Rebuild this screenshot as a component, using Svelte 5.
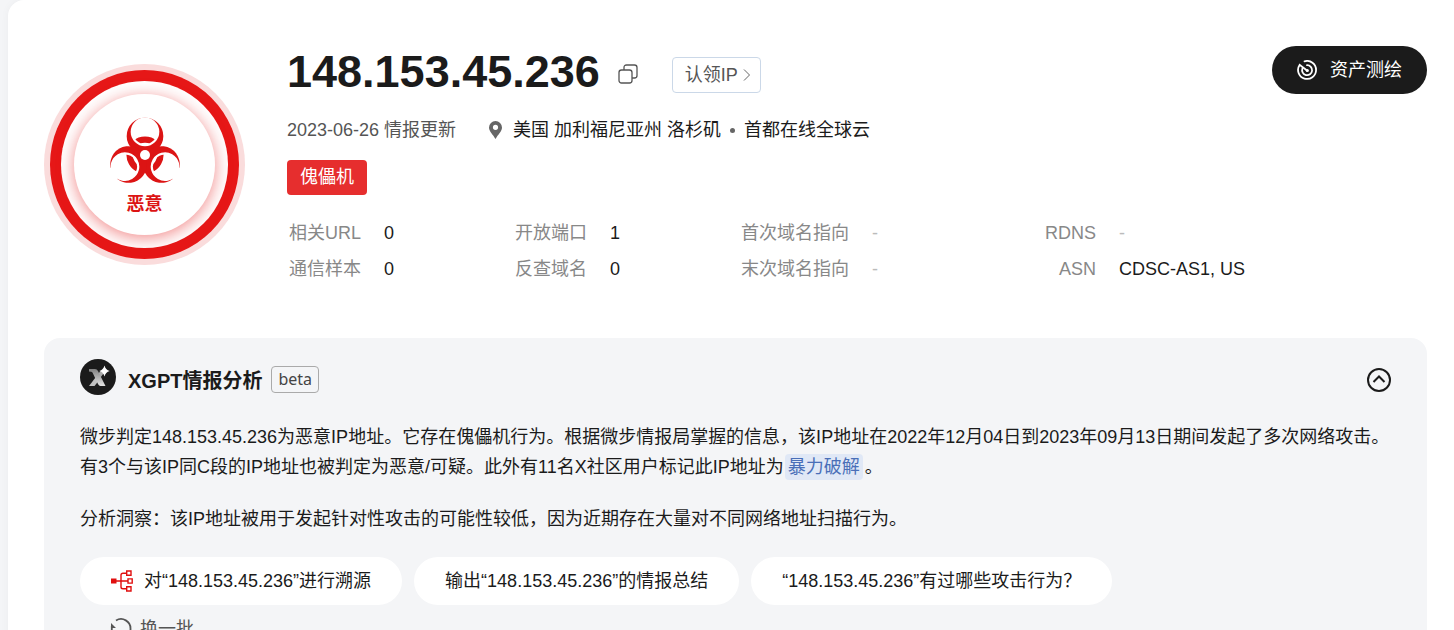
<script>
  const ip = '148.153.45.236';
  const stats = [
    [['相关URL', '0'], ['通信样本', '0']],
    [['开放端口', '1'], ['反查域名', '0']],
    [['首次域名指向', '-'], ['末次域名指向', '-']],
    [['RDNS', '-'], ['ASN', 'CDSC-AS1, US']],
  ];
  let open = $state(true);
</script>

<main class="page">
  <div class="sheet">
    <header class="summary">
      <div class="verdict">
        <div class="ring">
          <div class="halo">
            <div class="core">
              <svg class="hazard" viewBox="-108 -117 216 210" aria-hidden="true">
                <defs>
                  <clipPath id="petal"><circle cx="0" cy="-69" r="36" /></clipPath>
                </defs>
                {#each [0, 120, 240] as a}
                  <circle cx="0" cy="-57" r="55" fill="#dc1414" transform="rotate({a})" />
                {/each}
                {#each [0, 120, 240] as a}
                  <g transform="rotate({a})">
                    <circle cx="0" cy="-69.500" r="43" fill="#fff" />
                    <circle r="46" fill="none" stroke="#dc1414" stroke-width="19" clip-path="url(#petal)" />
                  </g>
                {/each}
                <circle r="15" fill="#fff" />
                <path d="M-108 42 -84 72M108 42 84 72" stroke="#fff" stroke-width="14" />
              </svg>
              <strong>恶意</strong>
            </div>
          </div>
        </div>
      </div>

      <div class="info">
        <div class="title-row">
          <h1>{ip}</h1>
          <button class="copy" aria-label="复制">
            <svg width="20" height="20" viewBox="0 0 20 20" fill="none" stroke="#555" stroke-width="1.3">
              <rect x="1" y="6" width="13" height="13" rx="2.5" />
              <path d="M6 6V3.500Q6 1 8.500 1H16.500Q19 1 19 3.500V11.500Q19 14 16.500 14H14" />
            </svg>
          </button>
          <button class="claim">认领IP
            <svg width="8" height="12" viewBox="0 0 8 12" fill="none" stroke="#666"><path d="M1 .5 6.500 6 1 11.500" /></svg>
          </button>
          <button class="asset">
            <svg width="20" height="20" viewBox="0 0 20 20" fill="none" stroke="#fff" stroke-width="1.800" stroke-linecap="round">
              <path d="M7.500 1.300A9 9 0 1 1 2.600 4.900L10 10.500" />
              <path d="M10 5.200A5 5 0 1 1 5.400 8.500" />
              <circle cx="10.300" cy="10.500" r="1.600" fill="#fff" stroke="none" />
            </svg>
            资产测绘
          </button>
        </div>

        <div class="meta">
          <span class="date">2023-06-26 情报更新</span>
          <svg width="13" height="18" viewBox="0 0 13 18"><path fill="#666" fill-rule="evenodd" d="M6.500 0A6.500 6.500 0 0 0 0 6.500C0 10.500 4 13.500 6.500 18 9 13.500 13 10.500 13 6.500A6.500 6.500 0 0 0 6.500 0ZM6.500 3.700A2.600 2.600 0 1 1 6.500 8.900 2.600 2.600 0 1 1 6.500 3.700Z" /></svg>
          <span>美国 加利福尼亚州 洛杉矶</span>
          <i class="dot"></i>
          <span>首都在线全球云</span>
        </div>

        <span class="tag">傀儡机</span>

        <div class="stats">
          {#each stats as group}
            <dl>
              {#each group as [label, value]}
                <dt>{label}</dt>
                <dd class:empty={value === '-'}>{value}</dd>
              {/each}
            </dl>
          {/each}
        </div>
      </div>
    </header>

    <section class="panel">
      <div class="panel-head">
        <svg width="36" height="36" viewBox="0 0 36 36" aria-hidden="true">
          <defs>
            <linearGradient id="metal" x1="0" y1="0" x2="0" y2="1">
              <stop offset="0" stop-color="#808080" /><stop offset="1" stop-color="#e4e4e4" />
            </linearGradient>
          </defs>
          <circle cx="18" cy="18" r="18" fill="#1b1b1b" />
          <path fill="#c0c0c0" d="M9 27 15.500 18.500 18.500 22 14.500 27Z" />
          <path fill="#aaa" d="M18.500 14.500 20.500 12 23.500 14.500 20.500 18.500Z" />
          <path fill="url(#metal)" d="M9 10H15Q17 10 18 12L25.500 27H20.500Q19 27 18 25L12.500 13.500Q12 12.700 9 12.500Z" />
          <path fill="#fff" d="M24.500 6.500Q25.500 10.700 29.700 12 25.500 13.300 24.500 17.500 23.300 13.300 19.300 12 23.300 10.700 24.500 6.500Z" />
        </svg>
        <h2>XGPT情报分析</h2>
        <span class="beta">beta</span>
        <button class="toggle" aria-label="收起" aria-expanded={open} onclick={() => (open = !open)}>
          <svg width="24" height="24" viewBox="0 0 24 24" fill="none" stroke="#1b1b1b" stroke-width="2">
            <circle cx="12" cy="12" r="11" /><path d="M6.500 14 12 8.500 17.500 14" />
          </svg>
        </button>
      </div>

      {#if open}
        <p>微步判定148.153.45.236为恶意IP地址。它存在傀儡机行为。根据微步情报局掌握的信息，该IP地址在2022年12月04日到2023年09月13日期间发起了多次网络攻击。有3个与该IP同C段的IP地址也被判定为恶意/可疑。此外有11名X社区用户标记此IP地址为<a href="#tag">暴力破解</a>。</p>
        <p>分析洞察：该IP地址被用于发起针对性攻击的可能性较低，因为近期存在大量对不同网络地址扫描行为。</p>

        <div class="prompts">
          <button>
            <svg width="22" height="22" viewBox="0 0 22 22" fill="none" stroke="#e00f0f" stroke-width="1.400">
              <path fill="#e00f0f" stroke="none" d="M0 8.500H5.500V13.500H0Z" />
              <path d="M5 11H17M15 3.200H12Q10 3.200 10 5V17Q10 18.800 12 18.800H15" />
              <path d="M15.700 1H20V5.300H15.700ZM17 8.900H21.200V13.100H17ZM15.700 16.700H20V21H15.700Z" />
            </svg>
            对“{ip}”进行溯源
          </button>
          <button>输出“{ip}”的情报总结</button>
          <button>“{ip}”有过哪些攻击行为？</button>
        </div>

        <button class="refresh">
          <svg width="22" height="22" viewBox="0 0 22 22" fill="none" stroke="#555" stroke-width="1.800">
            <path d="M6 2.500A9.500 9.500 0 0 1 20.500 11V14M16 19.500A9.500 9.500 0 0 1 1.800 13V8" />
            <path fill="#555" stroke="none" d="M1 5 6 10H1ZM21.500 17 16.500 12H21.500Z" />
          </svg>
          换一批
        </button>
      {/if}
    </section>
  </div>
</main>

<style>
  :global(body) { margin: 0; background: #f4f5f7; }
  * { box-sizing: border-box; }
  .page {
    height: 100vh;
    overflow: hidden;
    padding-left: 8px;
    font: 18px/30px "Liberation Sans", "Noto Sans CJK SC", sans-serif;
    color: #1b1b1b;
  }
  button { font: inherit; color: inherit; background: none; border: 0; padding: 0; cursor: pointer; }
  h1, h2, p, dl, dd { margin: 0; }
  svg { display: block; flex: none; }
  .sheet {
    min-height: 100%;
    padding: 0 27px 0 36px;
    background: #fff;
    border-radius: 16px 0 0 0;
    box-shadow: 0 0 8px rgba(0, 0, 0, 0.04);
  }
  .summary { display: flex; gap: 42px; padding-top: 46px; }
  .verdict, .ring, .halo, .core { border-radius: 50%; flex: none; }
  .verdict { align-self: flex-start; margin-top: 18px; padding: 6px; background: #fadcdc; }
  .ring { padding: 11px; background: #e61717; }
  .halo { padding: 13px; background: #fff; }
  .core {
    display: flex;
    flex-direction: column;
    align-items: center;
    width: 141px;
    height: 141px;
    padding-top: 22px;
    background: #fff;
    box-shadow: 0 3px 16px rgba(230, 23, 23, 0.5);
    color: #dc1414;
  }
  .hazard { width: 72px; height: 70px; }
  .core strong { line-height: 36px; }
  .info { flex: 1; min-width: 0; }
  .title-row { display: flex; align-items: flex-start; }
  h1 { font-size: 45px; line-height: 52px; }
  .copy { margin: 18px 34px 0 18px; }
  .claim {
    display: flex;
    align-items: center;
    gap: 5px;
    height: 36px;
    margin-top: 11px;
    padding: 0 9px 0 12px;
    border: 1px solid #cbd8e8;
    border-radius: 4px;
    color: #555;
  }
  .asset {
    display: flex;
    align-items: center;
    gap: 13px;
    height: 48px;
    margin-left: auto;
    padding: 0 25px;
    border-radius: 24px;
    background: #1b1b1b;
    color: #fff;
  }
  .meta { display: flex; align-items: center; margin-top: 17px; }
  .date { margin-right: 33px; color: #555; }
  .meta svg { margin-right: 11px; }
  .dot { width: 5px; height: 5px; margin: 0 9px; border-radius: 50%; background: #666; }
  .tag {
    display: inline-block;
    margin-top: 15px;
    padding: 0 13px;
    border-radius: 4px;
    background: #e62e2e;
    color: #fff;
    line-height: 35px;
    vertical-align: top;
  }
  .stats {
    display: grid;
    grid-template-columns: 226fr 226fr 304fr 382fr;
    margin-top: 20px;
    padding-left: 2px;
    line-height: 36px;
  }
  dl { display: grid; grid-template-columns: auto 1fr; column-gap: 23px; }
  dt { color: #888; text-align: right; }
  .empty { color: #bbb; }
  .panel { margin-top: 51px; padding: 21px 36px; border-radius: 16px; background: #f4f5f7; }
  .panel-head { display: flex; align-items: center; height: 36px; margin-bottom: 27px; }
  h2 { margin: 8px 9px 0 12px; font-size: 20px; line-height: 24px; }
  .beta {
    margin-top: 5px;
    padding: 0 6px;
    border: 1px solid #aaa;
    border-radius: 4px;
    color: #444;
    font-family: "Noto Sans", sans-serif;
    font-size: 16px;
    line-height: 25px;
  }
  .toggle { margin: 6px 0 0 auto; }
  p + p { margin-top: 22px; }
  p a {
    margin: 0 2px 0 1px;
    padding: 3px;
    border-radius: 4px;
    background: #e0e8f6;
    color: #4a6fb8;
    text-decoration: none;
  }
  .prompts { display: flex; gap: 12px; margin-top: 23px; }
  .prompts button {
    display: flex;
    align-items: center;
    gap: 11px;
    height: 48px;
    padding: 0 31px;
    border-radius: 24px;
    background: #fff;
  }
  .refresh { display: flex; align-items: center; gap: 8px; margin: 9px 0 0 30px; color: #555; }
</style>
